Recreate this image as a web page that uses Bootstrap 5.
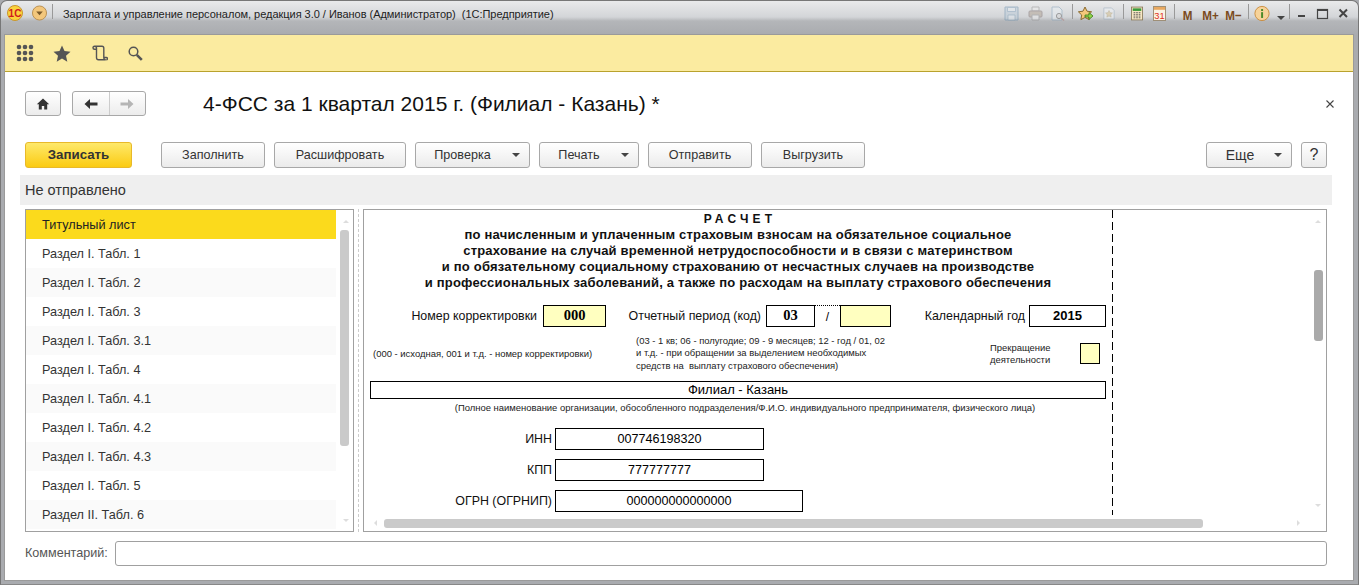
<!DOCTYPE html>
<html lang="ru">
<head>
<meta charset="utf-8">
<title>4-ФСС</title>
<link href="https://cdn.jsdelivr.net/npm/bootstrap@5.3.0/dist/css/bootstrap.min.css" rel="stylesheet">
<style>
html,body{height:585px;overflow:hidden;margin:0}
body{font-family:"Liberation Sans",Arial,sans-serif;font-size:12px;color:#333;background:#a9abaf}
.win{height:585px;width:1359px;display:flex;flex-direction:column;background:linear-gradient(#e9eaeb 0,#d3d5d8 16px,#b4b6b9 20px,#a9abaf 34px,#a9abaf 100%);border-radius:7px 7px 0 0;border:1px solid #777;border-bottom-color:#888}
.tbar{height:34px;flex:none;display:flex;align-items:flex-start;padding:0 8px 0 6px}
.tbar .ttl{font-size:11px;color:#222;margin-left:10px;margin-top:5px;white-space:nowrap;letter-spacing:-.03px}
.tsep{width:1px;height:15px;background:#999;margin-top:3px;flex:none}
.tic{flex:none;margin-top:5px}
.mk{font-weight:700;color:#7a4a20;font-size:13.5px;margin-top:5px;flex:none;display:flex;justify-content:center;white-space:nowrap}
.mk span{display:block;transform:scaleX(.86)}
.inner{margin:0 5px 4px 4px;flex:1;display:flex;flex-direction:column;background:#fff;box-shadow:0 0 0 1px #9a9a9a}
.sect{height:37px;flex:none;background:#fbeba0;border-bottom:1px solid #b9a22d;display:flex;align-items:center;padding-left:11px}
.sect svg{flex:none}
.body{flex:1;display:flex;flex-direction:column;padding:0 26px 0 15px;position:relative}
.head{height:70px;flex:none;display:flex;align-items:flex-start}
.navb{height:25px;border:1px solid #a8a8a8;border-radius:3px;background:linear-gradient(#fff,#ececec);display:flex;align-items:center;justify-content:center}
.h1t{font-size:21px;color:#111;margin:0 0 0 57px;line-height:24px;font-weight:400;position:relative;top:1px}
.cmds{height:26px;flex:none;display:flex;margin:0 0 0 5px}
.ob{height:26px;border:1px solid #a8a8a8;border-radius:3px;background:linear-gradient(#fff,#ebebeb);color:#333;font-size:12.6px;padding:0;display:flex;align-items:center;justify-content:center;line-height:1;flex:none}
.ob.pri{background:linear-gradient(#fee96a,#fbcb12);border-color:#e8b92a;font-weight:700;font-size:13.3px;color:#333}
.caret{width:0;height:0;border-left:4px solid transparent;border-right:4px solid transparent;border-top:4px solid #444;flex:none}
.stat{height:30px;flex:none;background:#efefef;margin:7px -5px 0 0;font-size:14.5px;padding-left:5px;line-height:30px;color:#333}
.work{height:323px;flex:none;display:flex;margin:4px 0 0 5px}
.lst{width:329px;flex:none;border:1px solid #a0a0a0;position:relative;overflow:hidden}
.lst ul{list-style:none;margin:0;padding:0;width:310px}
.lst li{height:29px;line-height:30px;padding-left:16px;font-size:12.7px;color:#333}
.lst li:nth-child(even){background:#fff}
.lst li:nth-child(odd){background:#fafafa}
.lst li.sel{background:#fbda1c;color:#222}
.spl{width:9px;flex:none;position:relative}
.spl::after{content:"";position:absolute;left:4px;top:0;bottom:0;border-left:1px dashed #ccc}
.doc{width:964px;flex:none;border:1px solid #a0a0a0;position:relative;overflow:hidden;background:#fff;color:#000}
.sheet{width:744px;margin-left:6px;height:305px;position:relative}
.cut{position:absolute;left:748px;top:0;height:305px;width:1px;background:repeating-linear-gradient(#000 0,#000 8px,transparent 8px,transparent 12px)}
.ttlb{font-weight:700;text-align:center;font-size:13px;line-height:16px;color:#111;letter-spacing:.2px;width:736px}
.ttlb .sp{letter-spacing:4.2px;font-size:12px;line-height:16px;padding:1px 0 0 4px}
.frow{display:flex;align-items:center;height:22px}
.fb{border:1px solid #000;height:22px;display:flex;align-items:center;justify-content:center;flex:none;font-size:12.6px;color:#000}
.fb.y{background:#ffffc0}
.fb.ser{font-family:"Liberation Serif",serif;font-weight:700;font-size:14.5px}
.fb.bl{font-weight:700;font-size:13px}
.fb.fil{font-size:13px}
.lab{flex:none;text-align:right;font-size:12.4px;color:#111;white-space:nowrap}
.tiny{font-size:9.45px;line-height:12.4px;color:#222;white-space:nowrap}
.org{width:736px;margin-top:3px;padding-left:14px;text-align:center}
.sb{position:absolute;background:#cacaca;border-radius:3px}
.ar{position:absolute;width:0;height:0}
.cmt{height:25px;flex:none;display:flex;align-items:center;margin:9px 0 0 5px}
.cmt label{width:90px;color:#555;font-size:12.6px;flex:none}
.cmtin{width:1212px;height:25px;border:1px solid #a0a0a0;border-radius:3px;background:#fff;padding:0}
</style>
</head>
<body>
<div class="win">
 <div class="tbar">
  <svg class="tic" style="margin-top:4px" width="16" height="16" viewBox="0 0 16 16"><circle cx="8" cy="8" r="7.5" fill="#fbd23c" stroke="#c9962a"/><text x="8" y="11.500" text-anchor="middle" font-size="10" font-weight="700" fill="#d01c1c" font-family="Liberation Sans">1С</text></svg>
  <svg class="tic" style="margin-left:9px;margin-top:4px" width="15" height="16" viewBox="0 0 16 16"><circle cx="8" cy="8" r="7.500" fill="#f3c77c" stroke="#b78d4e"/><path d="M4.500 6.500h7L8 10.500z" fill="#7a5a2c"/></svg>
  <div class="tsep" style="margin-left:5px"></div>
  <div class="ttl">Зарплата и управление персоналом, редакция 3.0 / Иванов (Администратор)&nbsp; (1С:Предприятие)</div>
  <div class="d-flex align-items-start ms-auto">
   <svg class="tic" style="opacity:.45" width="15" height="15" viewBox="0 0 15 15"><path d="M1 1h13v13H1z" fill="#b7c9d8" stroke="#5f87a8"/><path d="M3.500 1.500h8v4h-8zM4 9h7v5H4z" fill="#e5edf3" stroke="#5f87a8" stroke-width=".7"/></svg>
   <svg class="tic" style="margin-left:9px;opacity:.45" width="15" height="15" viewBox="0 0 15 15"><path d="M4 1h7v4H4z" fill="#eee" stroke="#888"/><rect x="1" y="5" width="13" height="6" rx="1" fill="#aa9a88" stroke="#766"/><path d="M4 9h7v5H4z" fill="#eee" stroke="#888"/></svg>
   <svg class="tic" style="margin-left:7px;opacity:.45" width="15" height="15" viewBox="0 0 15 15"><path d="M2 1h7l3 3v10H2z" fill="#eaf1f6" stroke="#7a9ab4"/><circle cx="9" cy="10" r="2.600" fill="#ddd" stroke="#555"/><path d="M11 12l3 2.500" stroke="#a77" stroke-width="1.500"/></svg>
   <div class="tsep" style="margin-left:7px"></div>
   <svg class="tic" style="margin-left:5px" width="16" height="16" viewBox="0 0 16 16"><path d="M7 1l2 4.200 4.600.6-3.300 3.200.8 4.600L7 11.500 2.900 13.600l.8-4.600L.4 5.800 5 5.200z" fill="#f5c87a" stroke="#8a6a30"/><path d="M7 9h4V6.500l4 3.500-4 3.500V11H7z" fill="#8fd44a" stroke="#3c7a18" stroke-width=".8"/></svg>
   <svg class="tic" style="margin-left:9px;opacity:.5" width="12" height="15" viewBox="0 0 14 15"><path d="M1 1h9l3 3v10H1z" fill="#f0f3f6" stroke="#8fa4b8"/><path d="M7 4l1.200 2.500 2.800.4-2 2 .5 2.800L7 10.400 4.500 11.700 5 8.900l-2-2 2.800-.4z" fill="#d9c28f" stroke="#a09060" stroke-width=".6"/></svg>
   <div class="tsep" style="margin-left:8px"></div>
   <svg class="tic" style="margin-left:7px" width="12" height="15" viewBox="0 0 14 16"><rect x=".5" y=".5" width="13" height="15" fill="#f6e7c3" stroke="#8a7a5a"/><rect x="2" y="2" width="10" height="3" fill="#3a9a3a"/><path d="M3 7h2M6 7h2M9 7h2M3 9h2M6 9h2M9 9h2M3 11h2M6 11h2M9 11h2M3 13h2M6 13h2M9 13h2" stroke="#555" stroke-width="1"/></svg>
   <svg class="tic" style="margin-left:10px" width="13" height="15" viewBox="0 0 14 16"><rect x=".5" y=".5" width="13" height="15" fill="#fbf3e3" stroke="#9a8a70"/><rect x="1" y="1" width="12" height="3" fill="#e8a860"/><text x="7" y="14" text-anchor="middle" font-size="10" fill="#e0301c" font-family="Liberation Sans">31</text></svg>
   <div class="tsep" style="margin-left:8px"></div>
   <div class="mk" style="margin-left:8px;width:10px"><span>M</span></div>
   <div class="mk" style="margin-left:10px;width:16px"><span>M+</span></div>
   <div class="mk" style="margin-left:7px;width:16px"><span>M−</span></div>
   <div class="tsep" style="margin-left:6px"></div>
   <svg class="tic" style="margin-left:5px;margin-top:4px" width="16" height="17" viewBox="0 0 18 18"><circle cx="9" cy="9" r="8" fill="#f7d39a" stroke="#c98a38"/><rect x="8" y="7.500" width="2.200" height="6.500" fill="#4a8a2a"/><rect x="8" y="4" width="2.200" height="2.200" fill="#4a8a2a"/></svg>
   <span class="caret" style="margin:15px 0 0 7px"></span>
   <div class="tsep" style="margin-left:4px"></div>
   <svg class="tic" style="margin-left:6px;margin-top:4px" width="54" height="16" viewBox="0 0 54 16"><rect x="2" y="10" width="7" height="2" fill="#444"/><rect x="21.500" y="4.500" width="10" height="9" fill="none" stroke="#444" stroke-width="1.200"/><rect x="21" y="4" width="11" height="2" fill="#444"/><path d="M43.500 4.500l7.500 7.500M51 4.500l-7.500 7.500" stroke="#444" stroke-width="2"/></svg>
  </div>
 </div>
 <div class="inner">
  <div class="sect">
   <svg width="18" height="18" viewBox="0 0 18 18" fill="#555"><circle cx="3" cy="3" r="2.300"/><circle cx="9" cy="3" r="2.300"/><circle cx="15" cy="3" r="2.300"/><circle cx="3" cy="9" r="2.300"/><circle cx="9" cy="9" r="2.300"/><circle cx="15" cy="9" r="2.300"/><circle cx="3" cy="15" r="2.300"/><circle cx="9" cy="15" r="2.300"/><circle cx="15" cy="15" r="2.300"/></svg>
   <svg style="margin-left:19px" width="18" height="17" viewBox="0 0 18 17"><path d="M9 .5l2.500 5.600 6 .6-4.500 4 1.300 6L9 13.600 3.700 16.700l1.300-6-4.500-4 6-.6z" fill="#555"/></svg>
   <svg style="margin-left:21px" width="16" height="16" viewBox="0 0 16 16" fill="none" stroke="#555" stroke-width="1.400"><path d="M2.500 1.200h7.500c1.200 0 1.800.8 1.800 2V12.500c0 1.300.8 2.300 2 2.300H6.500c-1.200 0-2-1-2-2.300V3C4.500 1.800 3.500 1.200 2.500 1.200 1.500 1.200 1 2 1 2.800c0 .8.600 1.500 1.500 1.500h2M11.800 12.500h2.500a1.100 1.100 0 0 1 0 2.300"/></svg>
   <svg style="margin-left:20px" width="15" height="15" viewBox="0 0 15 15" fill="none" stroke="#555"><circle cx="5.500" cy="5.500" r="4.300" stroke-width="1.500"/><path d="M8.800 8.800l5 5" stroke-width="2.600"/></svg>
  </div>
  <div class="body">
   <div class="head" style="padding:19px 0 0 5px">
    <div class="navb" style="width:36px"><svg width="14" height="12" viewBox="0 0 14 12"><path d="M7 .5L.8 6.200h2V11.500h3V8h2.400v3.500h3V6.200h2z" fill="#333"/></svg></div>
    <div class="navb" style="width:74px;margin-left:11px"><span class="d-flex align-items-center justify-content-center" style="width:37px;height:23px;border-right:1px solid #ccc"><svg width="14" height="10" viewBox="0 0 13 10"><path d="M5.500 0L0 5l5.500 5V6.500H13v-3H5.500z" fill="#333"/></svg></span><span class="d-flex align-items-center justify-content-center" style="width:36px"><svg width="14" height="10" viewBox="0 0 13 10"><path d="M7.500 0L13 5l-5.500 5V6.500H0v-3h7.500z" fill="#b5b5b5"/></svg></span></div>
    <h1 class="h1t">4-ФСС за 1 квартал 2015 г. (Филиал - Казань) *</h1>
    <svg class="ms-auto" style="margin:9px -7px 0 0" width="8" height="8" viewBox="0 0 8 8"><path d="M.5.500l7 7M7.500.500l-7 7" stroke="#444" stroke-width="1.100"/></svg>
   </div>
   <div class="cmds">
    <button class="ob pri" style="width:107px">Записать</button>
    <button class="ob" style="width:104px;margin-left:29px">Заполнить</button>
    <button class="ob" style="width:132px;margin-left:9px">Расшифровать</button>
    <button class="ob" style="width:115px;margin-left:9px"><span style="margin-left:9px">Проверка</span><span class="caret" style="margin-left:21px"></span></button>
    <button class="ob" style="width:100px;margin-left:9px"><span style="margin-left:9px">Печать</span><span class="caret" style="margin-left:21px"></span></button>
    <button class="ob" style="width:104px;margin-left:9px">Отправить</button>
    <button class="ob" style="width:104px;margin-left:9px">Выгрузить</button>
    <button class="ob ms-auto" style="width:86px"><span style="margin-left:10px;font-size:14px">Еще</span><span class="caret" style="margin-left:20px"></span></button>
    <button class="ob" style="width:26px;margin-left:9px;font-size:16px">?</button>
   </div>
   <div class="stat">Не отправлено</div>
   <div class="work">
    <div class="lst">
     <ul>
      <li class="sel">Титульный лист</li><li>Раздел I. Табл. 1</li><li>Раздел I. Табл. 2</li><li>Раздел I. Табл. 3</li><li>Раздел I. Табл. 3.1</li><li>Раздел I. Табл. 4</li><li>Раздел I. Табл. 4.1</li><li>Раздел I. Табл. 4.2</li><li>Раздел I. Табл. 4.3</li><li>Раздел I. Табл. 5</li><li>Раздел II. Табл. 6</li>
     </ul>
     <span class="ar" style="left:317px;top:10px;border-left:3px solid transparent;border-right:3px solid transparent;border-bottom:3px solid #ddd"></span>
     <div class="sb" style="left:314px;top:20px;width:9px;height:216px"></div>
     <span class="ar" style="left:317px;top:309px;border-left:3px solid transparent;border-right:3px solid transparent;border-top:3px solid #ddd"></span>
    </div>
    <div class="spl"></div>
    <div class="doc">
     <div class="sheet">
      <div class="ttlb">
       <div class="sp">РАСЧЕТ</div>
       <div>по начисленным и уплаченным страховым взносам на обязательное социальное</div>
       <div>страхование на случай временной нетрудоспособности и в связи с материнством</div>
       <div>и по обязательному социальному страхованию от несчастных случаев на производстве</div>
       <div>и профессиональных заболеваний, а также по расходам на выплату страхового обеспечения</div>
      </div>
      <div class="frow" style="margin-top:14px">
       <div class="lab" style="width:167px">Номер корректировки</div>
       <div class="fb y ser" style="width:63px;margin-left:6px">000</div>
       <div class="lab" style="width:155px">Отчетный период (код)</div>
       <div class="fb ser" style="width:49px;margin-left:5px">03</div>
       <div class="d-flex justify-content-center align-items-center" style="width:25px;height:22px;border-top:1px dotted #000;font-size:12px">/</div>
       <div class="fb y" style="width:51px"></div>
       <div class="lab" style="width:134px">Календарный год</div>
       <div class="fb bl" style="width:77px;margin-left:4px">2015</div>
      </div>
      <div class="d-flex" style="height:44px;margin-top:8px">
       <div class="tiny" style="width:263px;margin-top:13px;margin-left:3px">(000 - исходная, 001 и т.д. - номер корректировки)</div>
       <div class="tiny" style="width:354px">(03 - 1 кв; 06 - полугодие; 09 - 9 месяцев; 12 - год / 01, 02<br>и т.д. - при обращении за выделением необходимых<br>средств на&nbsp; выплату страхового обеспечения)</div>
       <div class="tiny" style="width:90px;margin-top:7px">Прекращение<br>деятельности</div>
       <div class="fb y" style="width:20px;height:21px;margin-top:8px"></div>
      </div>
      <div class="fb fil" style="height:18px;width:736px;margin-top:2px">Филиал - Казань</div>
      <div class="tiny org">(Полное наименование организации, обособленного подразделения/Ф.И.О. индивидуального предпринимателя, физического лица)</div>
      <div class="frow" style="margin-top:14px"><div class="lab" style="width:182px">ИНН</div><div class="fb" style="width:209px;margin-left:3px">007746198320</div></div>
      <div class="frow" style="margin-top:9px"><div class="lab" style="width:182px">КПП</div><div class="fb" style="width:209px;margin-left:3px">777777777</div></div>
      <div class="frow" style="margin-top:9px"><div class="lab" style="width:182px">ОГРН (ОГРНИП)</div><div class="fb" style="width:248px;margin-left:3px">000000000000000</div></div>
     </div>
     <div class="cut"></div>
     <span class="ar" style="left:951px;top:10px;border-left:3px solid transparent;border-right:3px solid transparent;border-bottom:3px solid #ddd"></span>
     <div class="sb" style="left:950px;top:60px;width:9px;height:71px;background:#aaa"></div>
     <span class="ar" style="left:951px;top:294px;border-left:3px solid transparent;border-right:3px solid transparent;border-top:3px solid #ddd"></span>
     <span class="ar" style="left:10px;top:310px;border-top:3px solid transparent;border-bottom:3px solid transparent;border-right:3px solid #ddd"></span>
     <div class="sb" style="left:20px;top:309px;width:819px;height:9px"></div>
     <span class="ar" style="left:933px;top:310px;border-top:3px solid transparent;border-bottom:3px solid transparent;border-left:3px solid #ddd"></span>
    </div>
   </div>
   <div class="cmt"><label for="cm">Комментарий:</label><input id="cm" class="cmtin" type="text"></div>
  </div>
 </div>
</div>
</body>
</html>
